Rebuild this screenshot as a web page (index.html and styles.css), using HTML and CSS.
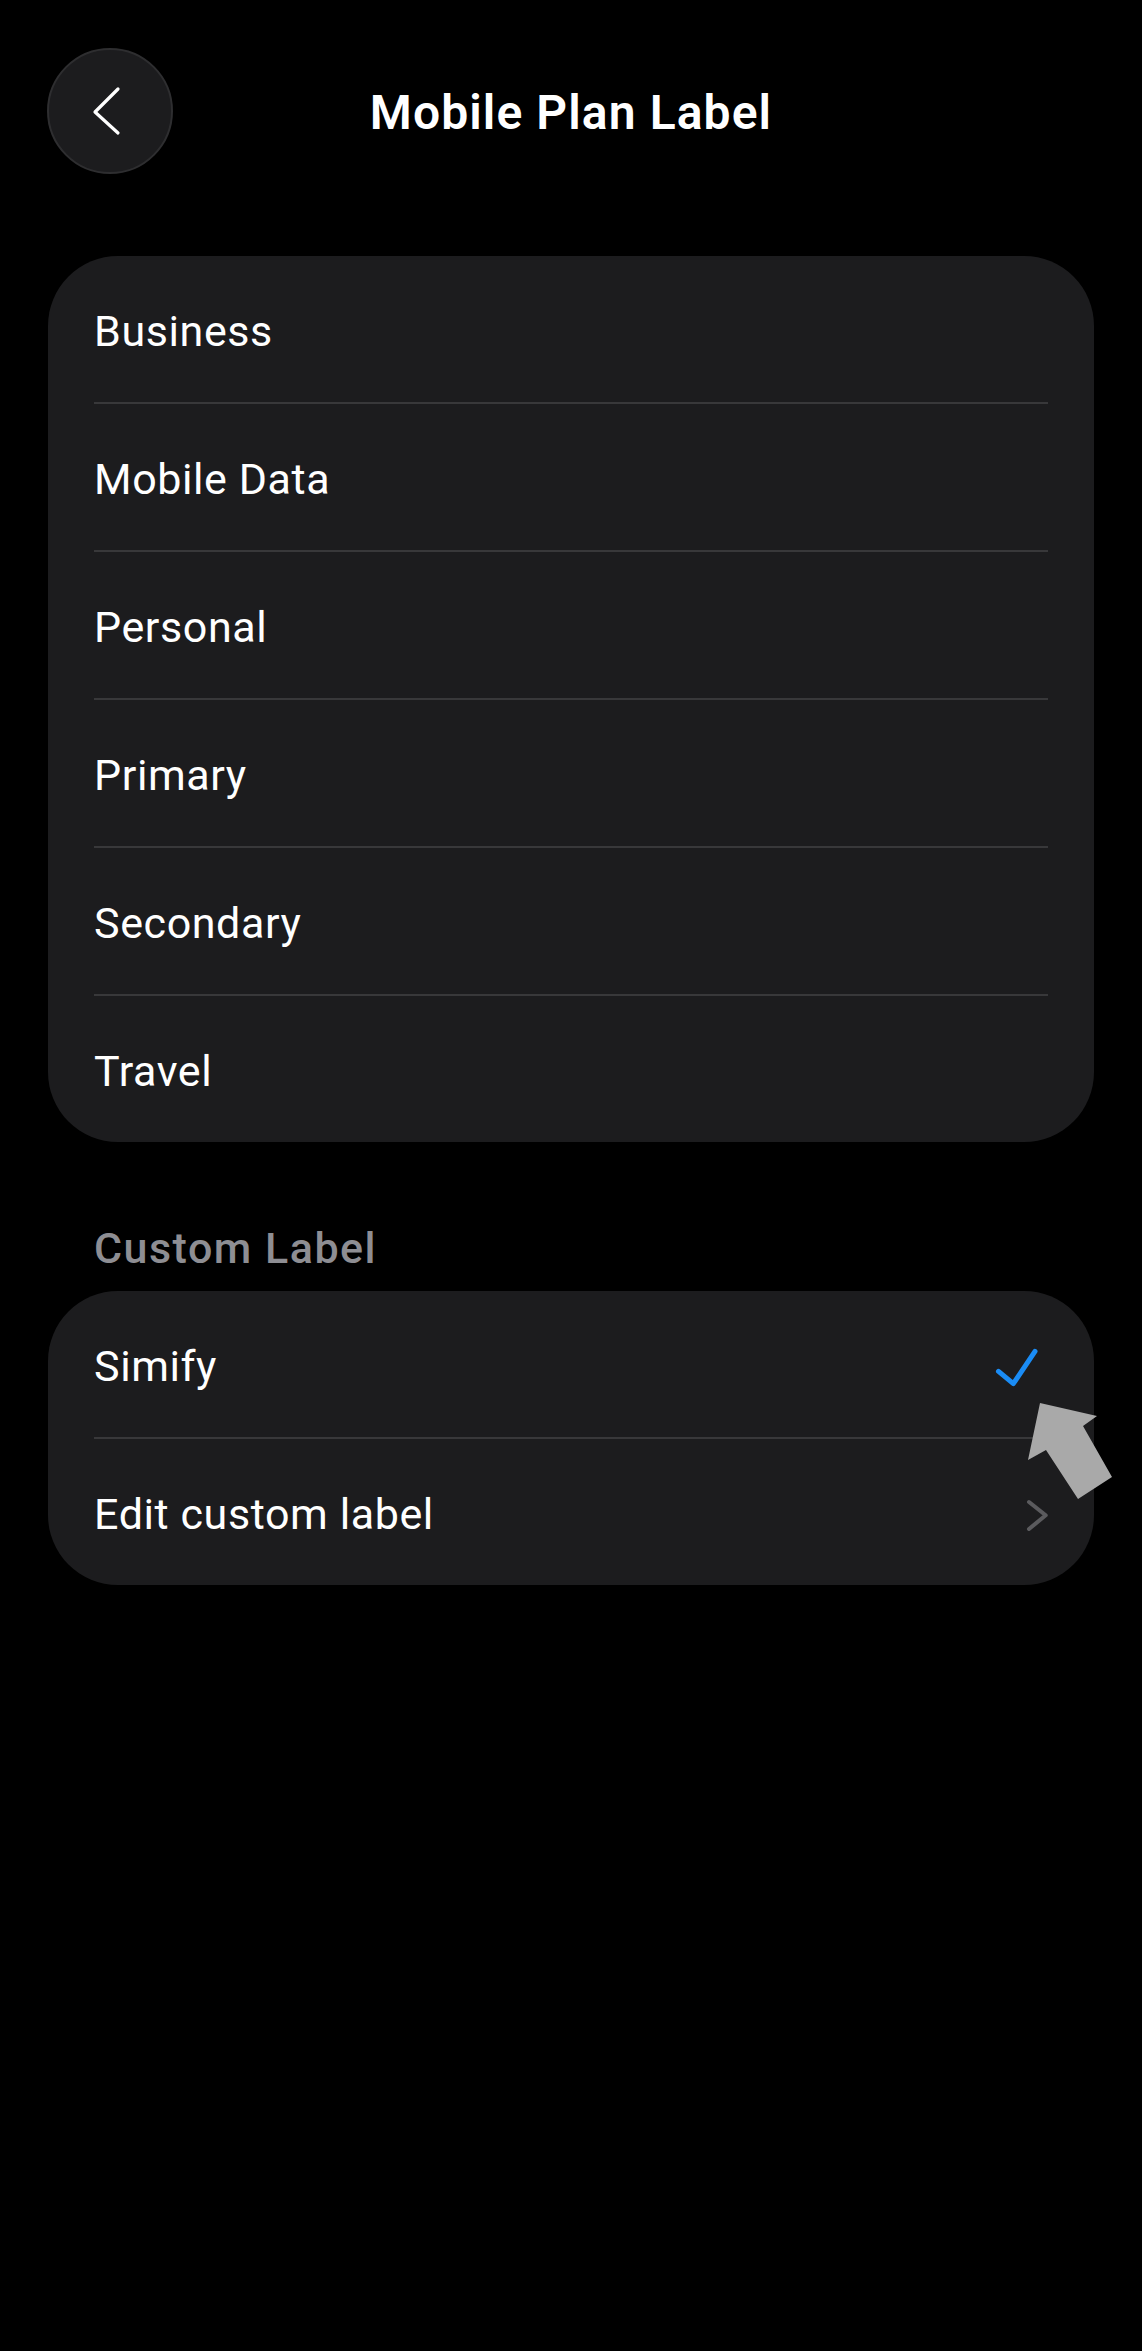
FILE: index.html
```html
<!doctype html>
<html>
<head>
<meta charset="utf-8">
<title>Mobile Plan Label</title>
<link rel="stylesheet" href="styles.css">
</head>
<body>
<div class="page">
	<div class="top_bar">
		<div class="back_btn">
			<svg width="126" height="126" viewBox="0 0 126 126"><path d="M71 41 L48 64 L71 85" fill="none" stroke="#fff" stroke-width="3.2" stroke-linecap="round" stroke-linejoin="round"/></svg>
		</div>
		<h1 class="title">Mobile Plan Label</h1>
		<div></div>
	</div>

	<div class="card">
		<div class="row">Business</div>
		<div class="row">Mobile Data</div>
		<div class="row">Personal</div>
		<div class="row">Primary</div>
		<div class="row">Secondary</div>
		<div class="row">Travel</div>
	</div>

	<div class="sec_title">Custom Label</div>
	<div class="card card_custom">
		<div class="row">
			<span>Simify</span>
			<svg class="check" width="54" height="48" viewBox="0 0 54 48"><path d="M4.5 28.3 L19.3 40.7 L41 8.3" fill="none" stroke="#1a8cf5" stroke-width="5" stroke-linecap="round" stroke-linejoin="round"/></svg>
		</div>
		<div class="row">
			<span>Edit custom label</span>
			<svg class="chev" width="24" height="40" viewBox="0 0 24 40"><path d="M5 7 L21.7 20.3 L5 34" fill="none" stroke="#5b5b5e" stroke-width="4" stroke-linecap="round" stroke-linejoin="round"/></svg>
		</div>
		<svg class="pointer" width="100" height="110" viewBox="0 0 100 110"><polygon points="20,8 77,21 63,31 92,82 58,104 26,55 8,65" fill="#a9a9a9"/></svg>
	</div>
</div>
</body>
</html>
```

FILE: styles.css
```css
*{margin:0; padding:0; box-sizing:border-box;}
html, body{background:#000;}
body{font-family:Roboto, "Liberation Sans", Arial, sans-serif; color:#fff; width:1142px; min-height:2351px;}

.top_bar{display:grid; grid-template-columns:126px 1fr 126px; align-items:center; padding:48px 47px 0;}
.back_btn{width:126px; height:126px; border-radius:50%; background:#1c1c1e; border:2px solid #2e2e30; display:flex; align-items:center; justify-content:center;}
.back_btn svg{display:block; margin:-2px;}
.title{font-size:48px; font-weight:600; text-align:center; line-height:1; letter-spacing:1.1px; padding-top:3px;}

.card{margin:82px 48px 0; background:#1c1c1e; border-radius:70px; padding:0 46px;}
.row{height:146px; padding-top:5px; display:flex; align-items:center; justify-content:space-between; font-size:43px; line-height:1; letter-spacing:0.6px;}
.row + .row{height:148px; border-top:2px solid #38383a;}

.sec_title{margin:85px 0 0 94px; font-size:43px; line-height:1; font-weight:500; color:#8e8e93; letter-spacing:1.5px;}

.card_custom{margin-top:21px; position:relative;}
.card_custom .pointer{position:absolute; left:972px; top:104px;}
```
